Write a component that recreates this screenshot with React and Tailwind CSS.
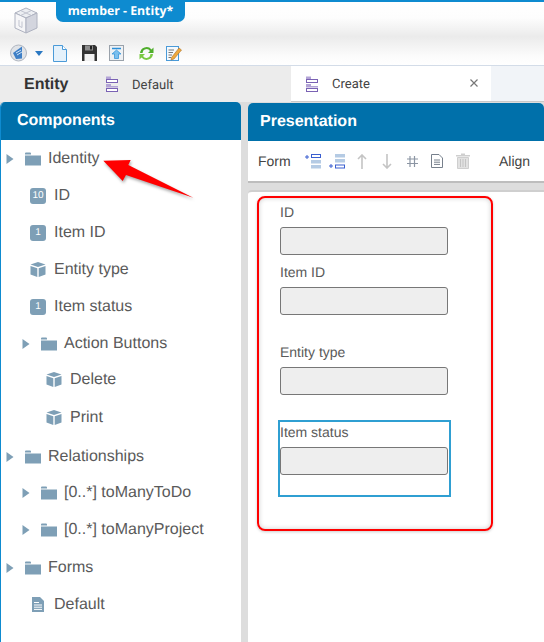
const Caret = () => (
  <svg width="8" height="10" viewBox="0 0 8 10" className="shrink-0"><path d="M0.5 0 L7.5 5 L0.5 10Z" fill="#7e9fb6" /></svg>
);
const Folder = () => (
  <svg width="16" height="14" viewBox="0 0 16 14" className="shrink-0 ml-[4px]"><path d="M0 1.5 Q0 0.5 1 0.5 H5 Q6 0.5 6 1.5 V2.5 H0Z M0 3.5 H16 V13.5 H0Z" fill="#7e9fb6" /></svg>
);
const Cube = () => (
  <svg width="16" height="15" viewBox="0 0 16 15" className="shrink-0 mr-px">
    <path d="M8 0 L15.5 2.6 L8 5 L0.5 2.6Z" fill="#7e9fb6" />
    <path d="M0.5 4 L7.3 6.2 V15 L0.5 12.5Z M15.5 4 L8.7 6.2 V15 L15.5 12.5Z" fill="#7e9fb6" />
  </svg>
);
const Num = ({ n }) => (
  <span className="w-4 h-4 mr-px rounded-[3px] bg-[#7e9fb6] text-white text-[10px] leading-4 text-center shrink-0">{n}</span>
);
const Doc = () => (
  <svg width="12" height="15" viewBox="0 0 12 15" className="shrink-0 ml-[3px] mr-[3px]">
    <path d="M0 0 H8 L12 4 V15 H0Z" fill="#7e9fb6" />
    <path d="M2 5.5 H7 M2 8 H10 M2 10.2 H10 M2 12.4 H10" stroke="#fff" strokeWidth="1" />
  </svg>
);
const FormIcon = () => (
  <svg width="14" height="16" viewBox="0 0 14 16" className="shrink-0">
    <path d="M1 0.5 H6 V3 H1Z" fill="#b3a4d6" />
    <rect x="1.5" y="3.5" width="11" height="3" fill="#fff" stroke="#7a62b4" />
    <path d="M1 8 H6 V10 H1Z" fill="#b3a4d6" />
    <path d="M1 10 H13 V11.5 H1Z" fill="#b3a4d6" />
    <rect x="1.5" y="12.5" width="11" height="3" fill="#fff" stroke="#7a62b4" />
  </svg>
);

const Row = ({ m, pl, caret, icon, label }) => (
  <div className={`flex items-center h-[35px] gap-[7px] ${m} ${pl}`}>
    {caret && <Caret />}
    {icon}
    <span>{label}</span>
  </div>
);

const rows = [
  { m: "mt-0", pl: "pl-[5px]", caret: true, icon: <Folder />, label: "Identity" },
  { m: "mt-[2px]", pl: "pl-[29px]", icon: <Num n="10" />, label: "ID" },
  { m: "mt-[2px]", pl: "pl-[29px]", icon: <Num n="1" />, label: "Item ID" },
  { m: "mt-[2px]", pl: "pl-[29px]", icon: <Cube />, label: "Entity type" },
  { m: "mt-[2px]", pl: "pl-[29px]", icon: <Num n="1" />, label: "Item status" },
  { m: "mt-[2px]", pl: "pl-[21px]", caret: true, icon: <Folder />, label: "Action Buttons" },
  { m: "mt-px", pl: "pl-[45px]", icon: <Cube />, label: "Delete" },
  { m: "mt-[3px]", pl: "pl-[45px]", icon: <Cube />, label: "Print" },
  { m: "mt-[4px]", pl: "pl-[5px]", caret: true, icon: <Folder />, label: "Relationships" },
  { m: "mt-px", pl: "pl-[21px]", caret: true, icon: <Folder />, label: "[0..*] toManyToDo" },
  { m: "mt-[2px]", pl: "pl-[21px]", caret: true, icon: <Folder />, label: "[0..*] toManyProject" },
  { m: "mt-[3px]", pl: "pl-[5px]", caret: true, icon: <Folder />, label: "Forms" },
  { m: "mt-[2px]", pl: "pl-[28px]", icon: <Doc />, label: "Default" },
];

const Field = ({ label, mb }) => (
  <div className={`w-[168px] ${mb}`}>
    <div className="h-[21px] leading-[12px] text-[14px] text-[#5a5a5a]">{label}</div>
    <div className="h-[28px] rounded-[3px] border border-[#777] bg-[#eeeeee]"></div>
  </div>
);

export default function App() {
  return (
    <div className="relative w-[544px] h-[642px] overflow-hidden bg-[#dddddd] text-[#5a5a5a] font-['Liberation_Sans',Arial,sans-serif] [text-rendering:geometricPrecision]">
      {/* Top chrome */}
      <div className="h-[66px] border-t-2 border-[#0e8bd0] border-b border-b-[#d3dce8] bg-[linear-gradient(180deg,#ffffff_0%,#fdfdfd_25%,#ebebeb_55%,#fbfbfb_85%,#ffffff_100%)] flex flex-col">
        <div className="flex h-[39px]">
          <svg width="24" height="27" viewBox="0 0 24 27" className="ml-[14px] mt-[5px] shrink-0">
            <path d="M12 1 L23 6 L12 11 L1 6Z" fill="#eceef2" stroke="#aeb2c0" />
            <path d="M1 6 L12 11 V26 L1 21Z" fill="#f6f6f8" stroke="#aeb2c0" />
            <path d="M23 6 L12 11 V26 L23 21Z" fill="#d3d5de" stroke="#aeb2c0" />
            <path d="M6.5 3.5 L17.5 8.5 M17.5 3.5 L6.5 8.5 M5 13 V19 L8 20.5 V14.5" fill="none" stroke="#c2c5d0" />
          </svg>
          <div className="ml-[18px] -mt-[2px] w-[129px] h-[22px] bg-[#0e8bd0] rounded-b-[7px] text-white font-bold text-[12.3px] leading-[22px] text-center font-['Open_Sans',sans-serif]">member - Entity*</div>
        </div>
        <div className="flex items-center h-[24px] pl-[10px]">
          <svg width="17" height="18" viewBox="0 0 17 18" className="shrink-0">
            <circle cx="8.5" cy="9" r="8" fill="#dfe3e8" stroke="#b0b6c0" />
            <path d="M3 9 L12 2.5 V14.5 L6 15Z" fill="#3e7fc6" />
            <path d="M6 9 L11 6 M7 11 L12 8" stroke="#cfe3f6" />
          </svg>
          <svg width="8" height="5" viewBox="0 0 8 5" className="ml-[8px] shrink-0"><path d="M0 0 H8 L4 5Z" fill="#2a78c2" /></svg>
          <svg width="14" height="17" viewBox="0 0 14 17" className="ml-[10px] shrink-0"><path d="M0.5 0.5 H9.5 L13.5 4.5 V16.5 H0.5Z" fill="#e4f1fb" stroke="#4a9ad8" /><path d="M9.5 0.5 V4.5 H13.5" fill="#fff" stroke="#4a9ad8" /></svg>
          <svg width="15" height="16" viewBox="0 0 15 16" className="ml-[15px] shrink-0"><path d="M0 0 H13 L15 2 V16 H0Z" fill="#333" /><rect x="3" y="0.5" width="8" height="5" fill="#8d8d8d" /><rect x="8" y="1" width="2" height="3.5" fill="#222" /><rect x="2.5" y="9" width="10" height="7" fill="#f2f2f2" /></svg>
          <svg width="15" height="16" viewBox="0 0 15 16" className="ml-[12px] shrink-0"><rect x="0.5" y="0.5" width="14" height="15" fill="#eef1f4" stroke="#9aa2ab" /><path d="M3 3.5 H12" stroke="#2b8fd8" strokeWidth="1.5" /><path d="M7.5 5 L12 9 H9.5 V13.5 H5.5 V9 H3Z" fill="#7cc0ee" stroke="#2b8fd8" strokeWidth="0.7" /></svg>
          <svg width="15" height="15" viewBox="0 0 15 15" className="ml-[15px] shrink-0"><path d="M1 7 A6.5 6.5 0 0 1 12.5 3.5 L14.5 1.5 V7 H9 L11 5 A4 4 0 0 0 3.6 7Z" fill="#4fae2c" /><path d="M14 8 A6.5 6.5 0 0 1 2.5 11.5 L0.5 13.5 V8 H6 L4 10 A4 4 0 0 0 11.4 8Z" fill="#7ac943" /></svg>
          <svg width="16" height="16" viewBox="0 0 16 16" className="ml-[12px] shrink-0"><rect x="0.5" y="1.5" width="12" height="14" fill="#f4f9fd" stroke="#4a9ad8" /><path d="M2.5 5 H8 M2.5 7.5 H7 M2.5 10 H6 M2.5 12.5 H5" stroke="#777" /><path d="M5.5 12.5 L13 3 L15.5 5 L8 14 L5 15Z" fill="#f0a93c" stroke="#a9702a" strokeWidth="0.6" /></svg>
        </div>
      </div>

      {/* Tab bar */}
      <div className="h-[36px] flex bg-[#ececec] text-[#444]">
        <div className="w-[291px] flex items-center">
          <span className="ml-[24px] mt-[2px] w-[81px] font-bold text-[16px] text-[#333]">Entity</span>
          <FormIcon />
          <span className="ml-[13px] mt-[3px] text-[13px] font-['Roboto',sans-serif]">Default</span>
        </div>
        <div className="w-[200px] bg-white flex items-center pl-[14px] border-b border-[#c9c9c9]">
          <FormIcon />
          <span className="ml-[13px] mt-[3px] text-[13px] font-['Roboto',sans-serif]">Create</span>
          <svg width="8" height="8" viewBox="0 0 8 8" className="ml-[100px] -mt-[2px]"><path d="M0.5 0.5 L7.5 7.5 M7.5 0.5 L0.5 7.5" stroke="#777" strokeWidth="1.2" /></svg>
        </div>
        <div className="flex-1 bg-[#f1f4f8] border-b border-[#c9c9c9]"></div>
      </div>

      {/* Panels */}
      <div className="flex h-[540px]">
        <div className="w-[241px] shrink-0 bg-white border-l border-[#0e8bd0] rounded-t-[5px] overflow-hidden">
          <div className="h-[38px] -ml-px bg-[#0070aa] text-white font-bold text-[16px] leading-[38px] pl-[17px]">Components</div>
          <div className="pt-px text-[16px] text-[#5a5a5a]">
            {rows.map((r, i) => <Row key={i} {...r} />)}
          </div>
        </div>

        <div className="ml-[7px] flex-1 flex flex-col">
          <div className="rounded-t-[5px] overflow-hidden bg-white h-[80px] border-b-2 border-[#bdbdbd] mt-px">
            <div className="h-[38px] bg-[#0070aa] text-white font-bold text-[16px] leading-[38px] pl-[12px]">Presentation</div>
            <div className="h-[40px] flex items-center text-[14px] text-[#444]">
              <span className="ml-[10px] w-[33px]">Form</span>
              <svg width="16" height="15" viewBox="0 0 16 15" className="ml-[14px] shrink-0"><path d="M0 3 H4 M2 1 V5" stroke="#3a5fd0" /><rect x="6.5" y="0.5" width="9" height="3" fill="#fff" stroke="#3a5fd0" /><rect x="6" y="6" width="10" height="3.5" fill="#b5cbe4" /><rect x="6" y="11" width="10" height="3.5" fill="#b5cbe4" /></svg>
              <svg width="16" height="15" viewBox="0 0 16 15" className="ml-[8px] shrink-0"><rect x="6" y="0" width="10" height="3.5" fill="#b5cbe4" /><rect x="6" y="5" width="10" height="3.5" fill="#b5cbe4" /><path d="M0 12 H4 M2 10 V14" stroke="#3a5fd0" /><rect x="6.5" y="11" width="9" height="3" fill="#fff" stroke="#3a5fd0" /></svg>
              <svg width="10" height="15" viewBox="0 0 10 15" className="ml-[12px] shrink-0"><path d="M5 1 V15 M1 5 L5 1 L9 5" fill="none" stroke="#c4c4c4" strokeWidth="1.6" /></svg>
              <svg width="10" height="15" viewBox="0 0 10 15" className="ml-[15px] shrink-0"><path d="M5 0 V14 M1 10 L5 14 L9 10" fill="none" stroke="#c4c4c4" strokeWidth="1.6" /></svg>
              <svg width="11" height="11" viewBox="0 0 11 11" className="ml-[15px] shrink-0"><path d="M3 0 V11 M7.5 0 V11 M0 3 H11 M0 7.5 H11" stroke="#8b95a3" strokeWidth="1.2" /></svg>
              <svg width="12" height="14" viewBox="0 0 12 14" className="ml-[13px] shrink-0"><path d="M0.5 0.5 H8 L11.5 4 V13.5 H0.5Z" fill="#fff" stroke="#77808c" /><path d="M3 6 H9 M3 8.2 H9 M3 10.4 H9" stroke="#77808c" /></svg>
              <svg width="14" height="16" viewBox="0 0 14 16" className="ml-[13px] shrink-0"><path d="M0 2 H14 V3.5 H0Z M5 0.5 H9 V2 H5Z" fill="#cfcfcf" /><path d="M1.5 4.5 H12.5 V15.5 H1.5Z" fill="#e2e2e2" stroke="#cfcfcf" /><path d="M4.5 6 V14 M7 6 V14 M9.5 6 V14" stroke="#c4c4c4" /></svg>
              <span className="ml-[29px]">Align</span>
            </div>
          </div>
          <div className="mt-[7px] flex-1 bg-white border-t-2 border-[#cfcfcf] rounded-tl-[4px] pl-[32px] pt-[14px]">
            <Field label="ID" mb="mb-[11px]" />
            <Field label="Item ID" mb="mb-[31px]" />
            <Field label="Entity type" mb="mb-[31px]" />
            <Field label="Item status" />
          </div>
        </div>
      </div>

      {/* Selection box on the canvas */}
      <div className="absolute left-[278px] top-[420px] w-[173px] h-[77px] border-2 border-[#2f9fd2]"></div>

      {/* Red annotation */}
      <div className="absolute left-[257px] top-[196px] w-[236px] h-[335px] rounded-[8px] border-2 border-[#ff0000] shadow-[inset_0_0_5px_rgba(0,0,0,0.2),0_1px_3px_rgba(0,0,0,0.2)]"></div>
      <svg width="100" height="50" viewBox="0 0 100 50" className="absolute left-[100px] top-[155px] drop-shadow-[1px_2px_1.5px_rgba(0,0,0,0.35)]">
        <path d="M3.3 5.7 L30.7 5 L28.3 10 L93.3 42.7 L26 20 L22.7 26Z" fill="#ff0000" />
      </svg>
    </div>
  );
}
